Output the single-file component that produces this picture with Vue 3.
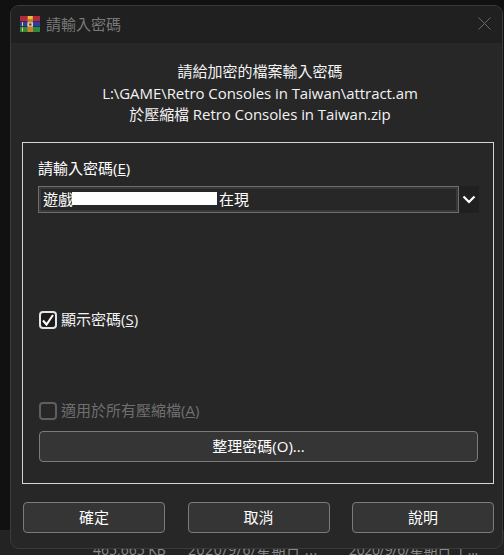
<script setup>
const buttons = ['確定', '取消', '說明']
const stripes = [
  { y: 0, c: '#b8283c' },
  { y: 5.5, c: '#2c3f9e' },
  { y: 11, c: '#2c8a3c' }
]
</script>

<template>
  <div class="screen">
    <div class="behind">
      <span class="b1">465,665 KB</span>
      <span class="b2">2020/9/6/星期日 ...</span>
      <span class="b3">2020/9/6/星期日 上...</span>
    </div>
    <div class="dialog">
      <header class="titlebar">
        <svg class="logo" width="20" height="16" viewBox="0 0 20 16">
          <rect v-for="s in stripes" :key="s.y" x="0" :y="s.y" width="20" height="5" :fill="s.c" />
          <rect x="7.5" y="0" width="5.5" height="16" fill="#c9802c" />
          <rect x="8" y="0" width="4.5" height="3" fill="#e8c040" />
          <rect x="7.5" y="6.5" width="5.5" height="4" fill="#d9d0c0" />
          <rect x="9" y="7.5" width="2.5" height="2" fill="#6b3a20" />
          <rect x="2" y="6" width="1" height="4" fill="#e8d050" />
          <rect x="2" y="11.5" width="1" height="4" fill="#e8d050" />
        </svg>
        <span class="title">請輸入密碼</span>
        <svg class="close" width="13" height="13" viewBox="0 0 13 13">
          <path d="M0.5 0.5 L12.5 12.5 M12.5 0.5 L0.5 12.5" stroke="#6a6a6a" stroke-width="1" fill="none" />
        </svg>
      </header>
      <main class="body">
        <div class="intro">
          <p>請給加密的檔案輸入密碼</p>
          <p class="latin">L:\GAME\Retro Consoles in Taiwan\attract.am</p>
          <p class="latin">於壓縮檔 Retro Consoles in Taiwan.zip</p>
        </div>
        <section class="group">
          <label class="field-label">請輸入密碼(<u>E</u>)</label>
          <div class="combo">
            <div class="combo-input">
              <span>遊戲</span><span class="redact"></span><span>在現</span>
            </div>
            <div class="combo-btn">
              <svg width="14" height="9" viewBox="0 0 14 9">
                <path d="M1.5 1.5 L7 7 L12.5 1.5" stroke="#fff" stroke-width="2.2" fill="none" />
              </svg>
            </div>
          </div>
          <label class="check show">
            <span class="box on">
              <svg width="14" height="14" viewBox="0 0 14 14">
                <path d="M2 7.5 L5.5 11.5 L12 2" stroke="#fff" stroke-width="2" fill="none" />
              </svg>
            </span>
            <span class="check-text">顯示密碼(<u>S</u>)</span>
          </label>
          <label class="check all">
            <span class="box"></span>
            <span class="check-text">適用於所有壓縮檔(<u>A</u>)</span>
          </label>
          <button class="btn manage">整理密碼(O)...</button>
        </section>
        <footer class="actions">
          <button v-for="b in buttons" :key="b" class="btn">{{ b }}</button>
        </footer>
      </main>
    </div>
  </div>
</template>

<style>
html, body { margin: 0; padding: 0; background: #111; }
</style>

<style scoped>
.screen {
  position: relative;
  width: 504px;
  height: 555px;
  overflow: hidden;
  padding: 5px 1px 0 10px;
  box-sizing: border-box;
  background: linear-gradient(#111 0, #111 530px, #232323 530px);
  font-family: "Open Sans", "Noto Sans CJK TC", sans-serif;
  font-size: 15px;
  color: #fff;
}
.behind {
  position: absolute;
  left: 0;
  top: 540px;
  width: 504px;
  height: 15px;
  color: #8a8a8a;
  font-size: 14px;
  line-height: 20px;
}
.behind span { position: absolute; top: 0; white-space: nowrap; }
.b1 { left: 93px; }
.b2 { left: 188px; letter-spacing: 0.6px; }
.b3 { left: 349px; letter-spacing: -0.3px; }
.dialog {
  position: relative;
  height: 544px;
  border: 1px solid #3a3a3a;
  border-radius: 9px;
  background: #272727;
  overflow: hidden;
  box-sizing: border-box;
}
.titlebar {
  height: 37px;
  display: flex;
  align-items: center;
  padding: 0 11px 2px 9px;
  box-sizing: border-box;
  background: #202020;
}
.logo { margin-right: 6px; }
.title { color: #787878; font-size: 15px; flex: 1; }
.body { padding: 0 8px 0 11px; }
.intro {
  height: 99px;
  padding: 18px 0 0 4px;
  box-sizing: border-box;
  text-align: center;
  line-height: 21.5px;
  color: #f2f2f2;
}
.intro p { margin: 0; }
.latin { letter-spacing: -0.06px; }
.group {
  height: 342px;
  box-sizing: border-box;
  border: 1px solid #d4d4d4;
  padding: 15px 15px 0 15px;
}
.field-label { display: block; line-height: 20px; }
.combo {
  display: flex;
  margin-top: 8px;
  height: 27px;
  width: 441px;
}
.combo-input {
  flex: 1;
  box-sizing: border-box;
  border: 1px solid #6e6e6e;
  outline: 2px solid #383838;
  outline-offset: -3px;
  display: flex;
  align-items: center;
  padding: 0 0 3px 4px;
}
.redact {
  display: inline-block;
  width: 145px;
  height: 13px;
  background: #fff;
  margin: 0 2px 0 -1px;
}
.combo-btn {
  width: 20px;
  background: #202020;
  display: flex;
  align-items: center;
  justify-content: center;
}
.check { display: flex; align-items: center; gap: 4px; line-height: 20px; margin-left: 1px; }
.check-text { margin-top: -3px; }
.show { margin-top: 97px; color: #f2f2f2; height: 20px; }
.all { margin-top: 71px; color: #6f6f6f; height: 20px; }
.box {
  width: 18px;
  height: 18px;
  box-sizing: border-box;
  border: 2px solid #5e5e5e;
  border-radius: 4px;
  display: flex;
  align-items: center;
  justify-content: center;
}
.box.on { border-color: #e4e4e4; background: #1c1c1c; }
.btn {
  box-sizing: border-box;
  border: 1px solid #7b7b7b;
  border-radius: 4px;
  background: #353535;
  color: #fff;
  font: inherit;
  padding: 0 0 2px;
}
.manage {
  display: block;
  width: 439px;
  height: 31px;
  margin-top: 10px;
  margin-left: 1px;
}
.actions {
  display: flex;
  gap: 22.5px;
  margin: 18px 0 0 1px;
}
.actions .btn { width: 142px; height: 31px; }
</style>
